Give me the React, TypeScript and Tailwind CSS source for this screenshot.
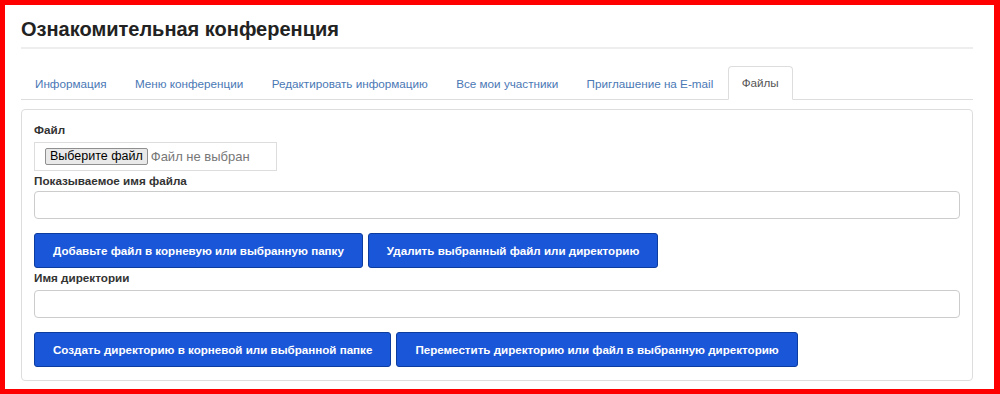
const tabs = [
  "Информация",
  "Меню конференции",
  "Редактировать информацию",
  "Все мои участники",
  "Приглашение на E-mail",
];

function BlueButton({ children }: { children: string }) {
  return (
    <button className="h-[35px] px-[18px] rounded-[3px] border border-[#0c3c9e] bg-[#1a56d8] text-white text-[11.6px] font-bold leading-none">
      {children}
    </button>
  );
}

function Label({ children }: { children: string }) {
  return (
    <div className="text-[11.7px] font-bold leading-[18px] text-[#333]">{children}</div>
  );
}

export default function App() {
  return (
    <div
      className="h-[394px] w-full bg-white border-t-[5px] border-l-[5px] border-r-[6px] border-b-[5px] border-[#ff0000] pl-4 pr-[21px] pt-[10px] text-[#333]"
      style={{ fontFamily: '"Liberation Sans", Arial, sans-serif' }}
    >
      <h1 className="text-[20px] font-bold leading-[28px] text-[#222] pb-[4px] border-b-2 border-[#eee]">
        Ознакомительная конференция
      </h1>

      <ul className="mt-[17px] flex border-b border-[#ddd]">
        {tabs.map((t) => (
          <li key={t} className="mr-[0.4px] -mb-px">
            <a className="block px-[13px] h-[34px] leading-[33px] text-[11.7px] text-[#4a78b5] border border-transparent">
              {t}
            </a>
          </li>
        ))}
        <li className="-mb-px">
          <a className="block px-[13px] h-[34px] leading-[32px] text-[11.7px] text-[#555] bg-white border border-[#ddd] border-b-white rounded-t-[4px]">
            Файлы
          </a>
        </li>
      </ul>

      <div className="mt-[9px] border border-[#ddd] rounded-[4px] px-[12px] pt-[11px] pb-[13px]">
        <Label>Файл</Label>
        <div className="mt-[3px] w-[243px] h-[29px] border border-[#ddd] flex items-center pl-[10px]">
          <span className="h-[17px] px-[4px] flex items-center bg-[#e9e9e9] border border-[#8f8f8f] rounded-[2px] text-[12.5px] text-black">
            Выберите файл
          </span>
          <span className="ml-[3px] text-[13px] text-[#777]">Файл не выбран</span>
        </div>

        <div className="mt-[1px]">
          <Label>Показываемое имя файла</Label>
        </div>
        <div className="mt-[1px] h-[28px] border border-[#ccc] rounded-[4px]" />

        <div className="mt-[14px] flex gap-[5px]">
          <BlueButton>Добавьте файл в корневую или выбранную папку</BlueButton>
          <BlueButton>Удалить выбранный файл или директорию</BlueButton>
        </div>

        <div className="mt-[1px]">
          <Label>Имя директории</Label>
        </div>
        <div className="mt-[3px] h-[28px] border border-[#ccc] rounded-[4px]" />

        <div className="mt-[14px] flex gap-[5px]">
          <BlueButton>Создать директорию в корневой или выбранной папке</BlueButton>
          <BlueButton>Переместить директорию или файл в выбранную директорию</BlueButton>
        </div>
      </div>
    </div>
  );
}
